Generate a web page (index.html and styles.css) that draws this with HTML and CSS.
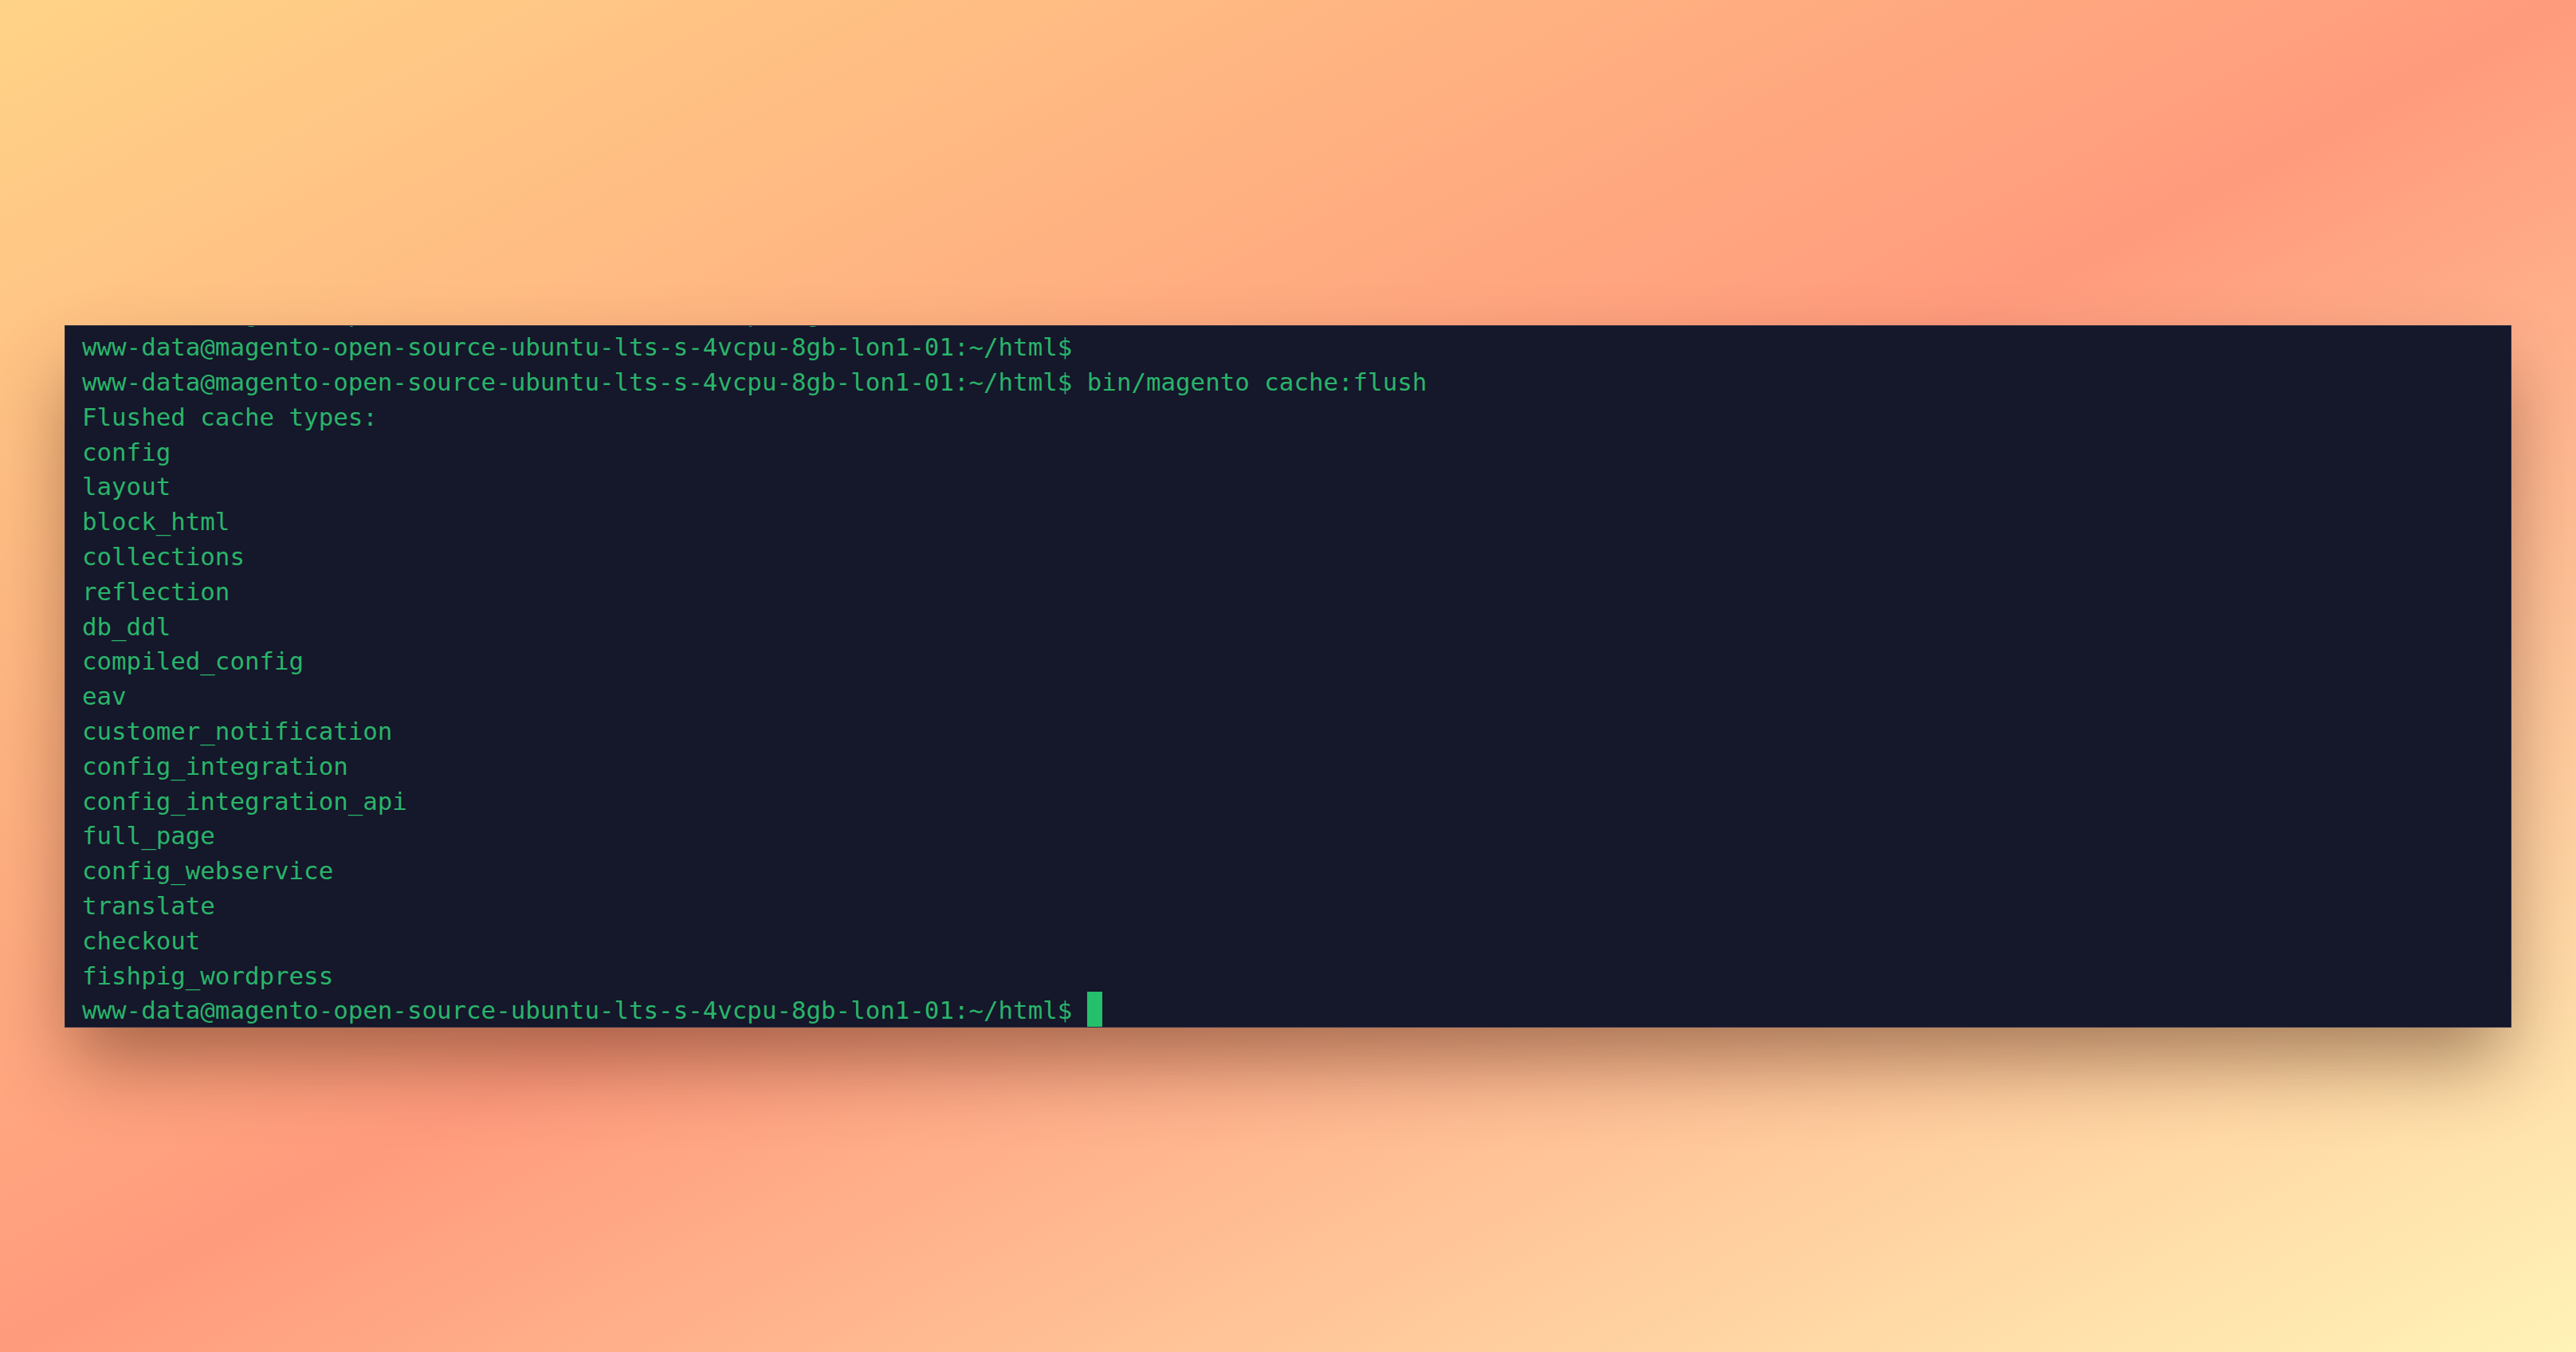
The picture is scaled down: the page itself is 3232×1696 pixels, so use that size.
FILE: index.html
```html
<!DOCTYPE html>
<html lang="en">
<head>
    <meta charset="UTF-8">
    <meta name="viewport" content="width=device-width, initial-scale=1.0">
    <title>bin/magento cache:flush</title>
    <link rel="stylesheet" href="styles.css">
</head>
<body>

    <!-- Terminal window -->
    <div class="terminal">
        <div class="screen">
            <!-- scrolled off the top, only descenders peek in -->
            <div class="line scrolled">www-data@magento-open-source-ubuntu-lts-s-4vcpu-8gb-lon1-01:~/html$</div>
            <div class="line">www-data@magento-open-source-ubuntu-lts-s-4vcpu-8gb-lon1-01:~/html$</div>
            <div class="line">www-data@magento-open-source-ubuntu-lts-s-4vcpu-8gb-lon1-01:~/html$ bin/magento cache:flush</div>
            <div class="line">Flushed cache types:</div>
            <div class="line">config</div>
            <div class="line">layout</div>
            <div class="line">block_html</div>
            <div class="line">collections</div>
            <div class="line">reflection</div>
            <div class="line">db_ddl</div>
            <div class="line">compiled_config</div>
            <div class="line">eav</div>
            <div class="line">customer_notification</div>
            <div class="line">config_integration</div>
            <div class="line">config_integration_api</div>
            <div class="line">full_page</div>
            <div class="line">config_webservice</div>
            <div class="line">translate</div>
            <div class="line">checkout</div>
            <div class="line">fishpig_wordpress</div>
            <div class="line">www-data@magento-open-source-ubuntu-lts-s-4vcpu-8gb-lon1-01:~/html$ <span class="cursor"></span></div>
        </div>
    </div>

</body>
</html>
```

FILE: styles.css
```css
/* General Styles */
body {
    margin: 0;
    padding: 0;
    height: 100vh;
    display: flex;
    justify-content: center;
    align-items: center;
    background: linear-gradient(to bottom right, #ffd387 0%, #ff9b7d 50%, #fff3b7 100%);
    overflow: hidden;
}

.terminal {
    box-sizing: border-box;
    width: 3070px;
    height: 881px;
    padding: 0 21px;
    background: #15172a;
    border: 1px solid #2a2c42;
    box-shadow: 0 50px 90px -10px rgba(50, 15, 0, 0.44);
    overflow: hidden;
}

.screen {
    margin-top: -37px;
}

.line {
    font-family: "DejaVu Sans Mono", "Liberation Mono", monospace;
    font-size: 30.8px;
    line-height: 43.8px;
    height: 43.8px;
    color: #2ab46a;
    white-space: pre;
}

/* old prompt sits above the window, only its tails show at the top edge */
.line.scrolled {
    margin-bottom: -1px;
}

.cursor {
    display: inline-block;
    width: 19px;
    height: 44px;
    margin-top: -2px;
    vertical-align: -10px;
    background: #24c06b;
}
```
